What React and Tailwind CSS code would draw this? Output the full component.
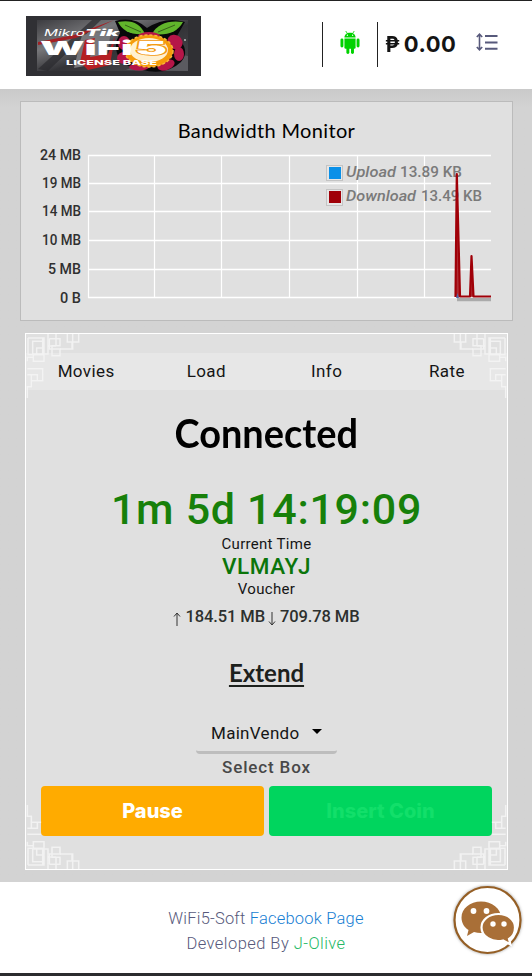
import React from "react";

const MENU = ["Movies", "Load", "Info", "Rate"];

const Y_TICKS = [
  { label: "24 MB", y: 155, length: 41 },
  { label: "19 MB", y: 183, length: 39 },
  { label: "14 MB", y: 211, length: 39 },
  { label: "10 MB", y: 240, length: 39 },
  { label: "5 MB", y: 269, length: 33 },
  { label: "0 B", y: 297.5, length: 21 },
];

const X_LINES = [88.5, 154.5, 221.5, 289.5, 357.5, 424.5];

function Logo() {
  return (
    <svg className="h-[60px] w-[175px]" viewBox="0 0 175 60">
      <defs>
        <linearGradient id="logoBg" x1="0" y1="0" x2="1" y2="1">
          <stop offset="0" stopColor="#3c3c40" />
          <stop offset="0.3" stopColor="#77777a" />
          <stop offset="0.55" stopColor="#333337" />
          <stop offset="1" stopColor="#4a4a4e" />
        </linearGradient>
      </defs>
      <rect width="175" height="60" fill="#303034" />
      <rect x="11" y="4" width="151" height="51" fill="url(#logoBg)" />
      <path d="M12 53 66 4h9L22 55z" fill="#2a2a2d" opacity=".7" />
      <path d="M12 26 48 19 88 4 50 22 12 29z" fill="#a32025" />
      <path d="M48 52 56 19 85 15 80 46z" fill="#77777b" />
      <path d="M54 46 59 24 69 22 64 41 82 38 89 20 84 49 62 54z" fill="#b51f22" />
      <path d="M100 54 140 36 162 40V55z" fill="#5b5b60" />
      <path d="M89 5Q108 0 121 12 140 0 159 6L151 20Q165 35 155 46 140 60 116 54 88 50 90 26L94 17z" fill="#08080a" />
      <path d="M92 6Q112 2 119 18 99 20 92 6z" fill="#61b52b" />
      <path d="M157 6Q134 3 126 18 149 21 157 6z" fill="#61b52b" />
      <path d="M99 9 115 16M149 9 132 16" stroke="#365f19" strokeWidth="1" />
      <g fill="#b51648">
        <ellipse cx="123" cy="20" rx="11" ry="4" />
        <ellipse cx="98" cy="27" rx="6" ry="7" />
        <ellipse cx="149" cy="26" rx="8" ry="7" transform="rotate(35 149 26)" />
        <ellipse cx="153" cy="38" rx="5" ry="7" />
        <ellipse cx="98" cy="42" rx="7" ry="6" />
        <ellipse cx="113" cy="51" rx="10" ry="3.5" />
        <ellipse cx="140" cy="49" rx="9" ry="5" transform="rotate(-20 140 49)" />
      </g>
      <ellipse cx="123" cy="35" rx="24" ry="16" fill="#f59b0b" stroke="#f8b73b" strokeWidth="1.5" strokeDasharray="3 2" />
      <ellipse cx="123" cy="34" rx="19" ry="12" fill="#fff0cf" />
      <g fill="#fff" fontFamily="Inter, Liberation Sans, sans-serif">
        <text x="18" y="20" fontSize="9" fontStyle="italic" textLength="41" lengthAdjust="spacingAndGlyphs">Mikro</text>
        <text x="59" y="20" fontSize="9" fontStyle="italic" fontWeight="900" textLength="34" lengthAdjust="spacingAndGlyphs">Tik</text>
        <text x="14" y="39" fontSize="19" fontWeight="900" textLength="93" lengthAdjust="spacingAndGlyphs">WiFi</text>
        <text x="109" y="39" fontSize="19" fontWeight="900" textLength="32" lengthAdjust="spacingAndGlyphs" stroke="#f39a12" strokeWidth="1.5" paintOrder="stroke">5</text>
        <text x="40" y="49" fontSize="6.5" fontWeight="800" textLength="91" lengthAdjust="spacingAndGlyphs">LICENSE BASE</text>
      </g>
      <path d="M158 24h2" stroke="#fff" />
    </svg>
  );
}

function AndroidIcon() {
  return (
    <svg className="mb-1 h-[23px] w-[20px]" viewBox="0 0 60 70">
      <g fill="#00d200">
        <path d="M13 20C13 11 20 5 30 5s17 6 17 15z" />
        <path d="M13 23h34v27a4 4 0 0 1-4 4H17a4 4 0 0 1-4-4z" />
        <rect x="1" y="23" width="9" height="27" rx="4.5" />
        <rect x="50" y="23" width="9" height="27" rx="4.5" />
        <rect x="19" y="45" width="9" height="25" rx="4.5" />
        <rect x="33" y="45" width="9" height="25" rx="4.5" />
      </g>
      <path d="M17 0l6 9M43 0l-6 9" stroke="#00d200" strokeWidth="2.5" />
      <circle cx="22" cy="13" r="2" fill="#fff" />
      <circle cx="38" cy="13" r="2" fill="#fff" />
    </svg>
  );
}

function LineHeightIcon() {
  return (
    <svg className="h-[18px] w-[22px]" viewBox="0 0 22 18" fill="none" stroke="#57597b" strokeWidth="1.6">
      <path d="M3.5 1.5v15M.8 4 3.5 1.2 6.2 4M.8 14l2.7 2.8L6.2 14" />
      <path d="M9 3h12.5M9 9.5h12.5M9 15.8h12.5" strokeWidth="2" />
    </svg>
  );
}

function Header() {
  return (
    <header className="flex h-[89px] items-start border-t border-[#222] bg-white pl-[26px]">
      <div className="mt-[15px]">
        <Logo />
      </div>
      <div className="mt-[21px] ml-[121px] flex h-[45px] w-[56px] items-center justify-center border-x border-[#222]">
        <AndroidIcon />
      </div>
      <div className="mt-[25px] ml-[7px] w-[92px] font-['Inter'] text-[22px] leading-9 font-bold whitespace-nowrap text-[#141414]">
        <span className="mr-[5px] inline-block origin-left scale-x-[.94]">₱</span>
        <span className="-ml-0.5 tracking-[.5px]">0.00</span>
      </div>
      <div className="mt-[32px] -ml-px">
        <LineHeightIcon />
      </div>
    </header>
  );
}

function BandwidthChart() {
  return (
    <svg className="block h-[170px] w-[491px] font-['Roboto']" viewBox="21 146 491 170">
      <g stroke="#fff">
        {Y_TICKS.map((t) => (
          <path key={t.label} d={`M88 ${Math.floor(t.y) + 0.5}H491`} strokeWidth="1.3" />
        ))}
        {X_LINES.map((x) => (
          <path key={x} d={`M${x} 155V298`} strokeWidth="1.2" />
        ))}
      </g>
      <g fill="#303030" fontSize="14" fontWeight="500" textAnchor="end">
        {Y_TICKS.map((t) => (
          <text key={t.label} x="81" y={t.y + 5} textLength={t.length} lengthAdjust="spacingAndGlyphs">
            {t.label}
          </text>
        ))}
      </g>
      <rect x="326.5" y="165.5" width="16" height="15" fill="#e6e6e6" stroke="#c4c4c4" />
      <rect x="329" y="167" width="12" height="12" fill="#0a90e8" />
      <rect x="326.5" y="189.5" width="16" height="16" fill="#e6e6e6" stroke="#c4c4c4" />
      <rect x="329" y="191" width="12" height="12" fill="#a00008" />
      <g fill="#7a7a7a" fontSize="15.5" fontWeight="500">
        <text x="346" y="177" fontStyle="italic" textLength="50" lengthAdjust="spacingAndGlyphs">Upload</text>
        <text x="400" y="177" textLength="62" lengthAdjust="spacingAndGlyphs">13.89 KB</text>
        <text x="346" y="201" fontStyle="italic" textLength="70" lengthAdjust="spacingAndGlyphs">Download</text>
        <text x="421" y="201" textLength="61" lengthAdjust="spacingAndGlyphs">13.49 KB</text>
      </g>
      <path d="M457 299.5H491" stroke="#aaa" strokeWidth="3.5" />
      <path
        d="M455.5 297 456.8 174 460 296.500H470L471.500 256 473.500 296.500H491"
        fill="#a00008"
        fillOpacity=".8"
        stroke="#a00008"
        strokeWidth="2.2"
        strokeLinejoin="round"
      />
      <path d="M456 298 457.5 293 459 298z" fill="#5264a4" />
    </svg>
  );
}

function Corner({ className }) {
  return (
    <svg className={`absolute h-[66px] w-[56px] ${className}`} viewBox="0 0 168 198" fill="none" stroke="#f5f5f5" strokeOpacity=".85" strokeWidth="4.5">
      <path d="M20 62V22H50V42H32V62M6 12H54V82H22V60H66V0M6 12V62H50V12" />
      <path d="M70 14H102V35H78V65H102V45H70V14M90 0V35M66 36H90" />
      <path d="M102 45H140V0M124 0V24H158V0M138 24V45" />
      <path d="M4 82V70H22M4 104H50V140H16V122H34V140M4 122H34M16 140V158H4V192" />
    </svg>
  );
}

function Arrow({ className = "" }) {
  return (
    <svg className={`mt-1 h-[14px] w-[8px] ${className}`} viewBox="0 0 8 14" fill="none" stroke="#333">
      <path d="M4 14V1.500M1 4.500 4 1l3 3.500" />
    </svg>
  );
}

function Panel() {
  return (
    <section className="relative mt-3 ml-[25px] flex h-[537px] w-[483px] flex-col items-center border border-white bg-[#e0e0e0] pt-[19px] font-['Roboto'] text-[#151515]">
      <nav className="grid h-[37px] w-full shrink-0 grid-cols-4 items-center bg-[#e7e7e7] text-center text-[17px] tracking-[.4px]">
        {MENU.map((m) => (
          <a key={m}>{m}</a>
        ))}
      </nav>
      <h1 className="mt-[19px] h-12 scale-x-[.925] font-['Comic_Sans_MS','Lato'] text-[41px] leading-[48px] font-bold text-black">
        Connected
      </h1>
      <div className="mt-[27px] h-[50px] text-[43px] leading-[50px] font-medium tracking-[.7px] whitespace-nowrap text-[#17800a]">
        1m 5d 14:19:09
      </div>
      <div className="h-[21px] text-[15px] leading-[21px] tracking-[.3px]">Current Time</div>
      <div className="h-[23px] text-[22.5px] leading-[23px] font-medium tracking-[.6px] text-[#0b750b]">VLMAYJ</div>
      <div className="h-[22px] text-[15px] leading-[22px] tracking-[.3px]">Voucher</div>
      <div className="mt-[5px] flex h-[23px] items-center text-[16.5px] leading-[23px] font-medium whitespace-nowrap text-[#2d302e]">
        <Arrow />
        <span className="mr-[3px] ml-1 tracking-[-.1px]">184.51 MB</span>
        <Arrow className="rotate-180" />
        <span className="ml-1 tracking-[-.1px]">709.78 MB</span>
      </div>
      <a className="mt-[29px] h-8 font-['Comic_Sans_MS','Lato'] text-[24px] leading-8 font-bold text-[#1d211d] underline decoration-2 underline-offset-[3px]">
        Extend
      </a>
      <div className="mt-[27px] flex h-[38px] w-[141px] items-center justify-between rounded-b border-b-[3px] border-[#bdbdbd] px-[15px] text-[17px] tracking-[.3px]">
        <span>MainVendo</span>
        <span className="-mt-1 h-0 w-0 border-x-[5px] border-t-[5px] border-x-transparent border-t-black" />
      </div>
      <div className="mt-[2px] h-[22px] text-[17px] leading-[22px] font-medium tracking-[.85px] text-[#484848]">Select Box</div>
      <div className="mt-2 grid w-[451px] grid-cols-2 gap-[5px] font-['Inter'] text-[20px] font-extrabold">
        <button className="h-[50px] rounded bg-[#ffab00] text-white">Pause</button>
        <button className="h-[50px] rounded bg-[#00d55e] text-[#12df6a]">Insert Coin</button>
      </div>
      <Corner className="top-0 left-0" />
      <Corner className="top-0 right-0 -scale-x-100" />
      <Corner className="bottom-0 left-0 -scale-y-100 [clip-path:polygon(0_0,100%_0,100%_50%,27%_50%,27%_100%,0_100%)]" />
      <Corner className="right-0 bottom-0 -scale-100 [clip-path:polygon(0_0,100%_0,100%_50%,27%_50%,27%_100%,0_100%)]" />
    </section>
  );
}

function ChatBadge() {
  return (
    <svg className="absolute top-[3px] right-[8px] h-[72px] w-[72px] drop-shadow-[0_0_1.5px_#55555590]" viewBox="452 885 72 72">
      <circle cx="487.5" cy="920" r="33" fill="#fff" stroke="#955f25" strokeWidth="2.2" />
      <g fill="#a96f37">
        <path d="M481 901.500c-11 0-19.500 7-19.500 16 0 5.500 3 10 7 12.500l-1.500 6 7-4c11 3.500 27-2 27-14.500 0-9-9-16-20-16z" />
        <path stroke="#fff" strokeWidth="2.2" d="M498.500 914c-9.500 0-17 6-17 13.500 0 9 10.500 15.500 21.500 13l7.500 4-1.500-5.500c4-2.500 6-6 6-11.500 0-7.500-7-13.500-16.500-13.500z" />
      </g>
      <g fill="#fff">
        <circle cx="473.5" cy="911" r="2.900" />
        <circle cx="486.5" cy="911" r="2.900" />
        <circle cx="493" cy="924" r="2.700" />
        <circle cx="504" cy="924" r="2.700" />
      </g>
    </svg>
  );
}

export default function App() {
  return (
    <div className="flex h-[976px] w-[532px] flex-col overflow-hidden bg-white">
      <Header />
      <main className="h-[793px] shrink-0 bg-[#d2d2d2] bg-linear-to-b from-[#cacaca] to-[#d3d3d3] to-[18px] pt-3">
        <section className="ml-5 h-[220px] w-[493px] border border-[#bbb] bg-[#e0e0e0]">
          <h2 className="h-[44px] pt-[14px] text-center font-['Comic_Sans_MS','Lato'] text-[20px] leading-[29px] tracking-[.35px] text-black">
            Bandwidth Monitor
          </h2>
          <BandwidthChart />
        </section>
        <Panel />
      </main>
      <footer className="relative h-[94px] shrink-0 border-b-[3px] border-[#2b2c2e] bg-white pt-[24px] text-center font-['Roboto'] text-[16.5px] leading-[25px] font-light text-[#57597b]">
        <p className="tracking-[.2px]">
          WiFi5-Soft <a className="text-[#177ed3]">Facebook Page</a>
        </p>
        <p className="tracking-[.45px]">
          Developed By <a className="text-[#25b865]">J-Olive</a>
        </p>
        <ChatBadge />
      </footer>
    </div>
  );
}
